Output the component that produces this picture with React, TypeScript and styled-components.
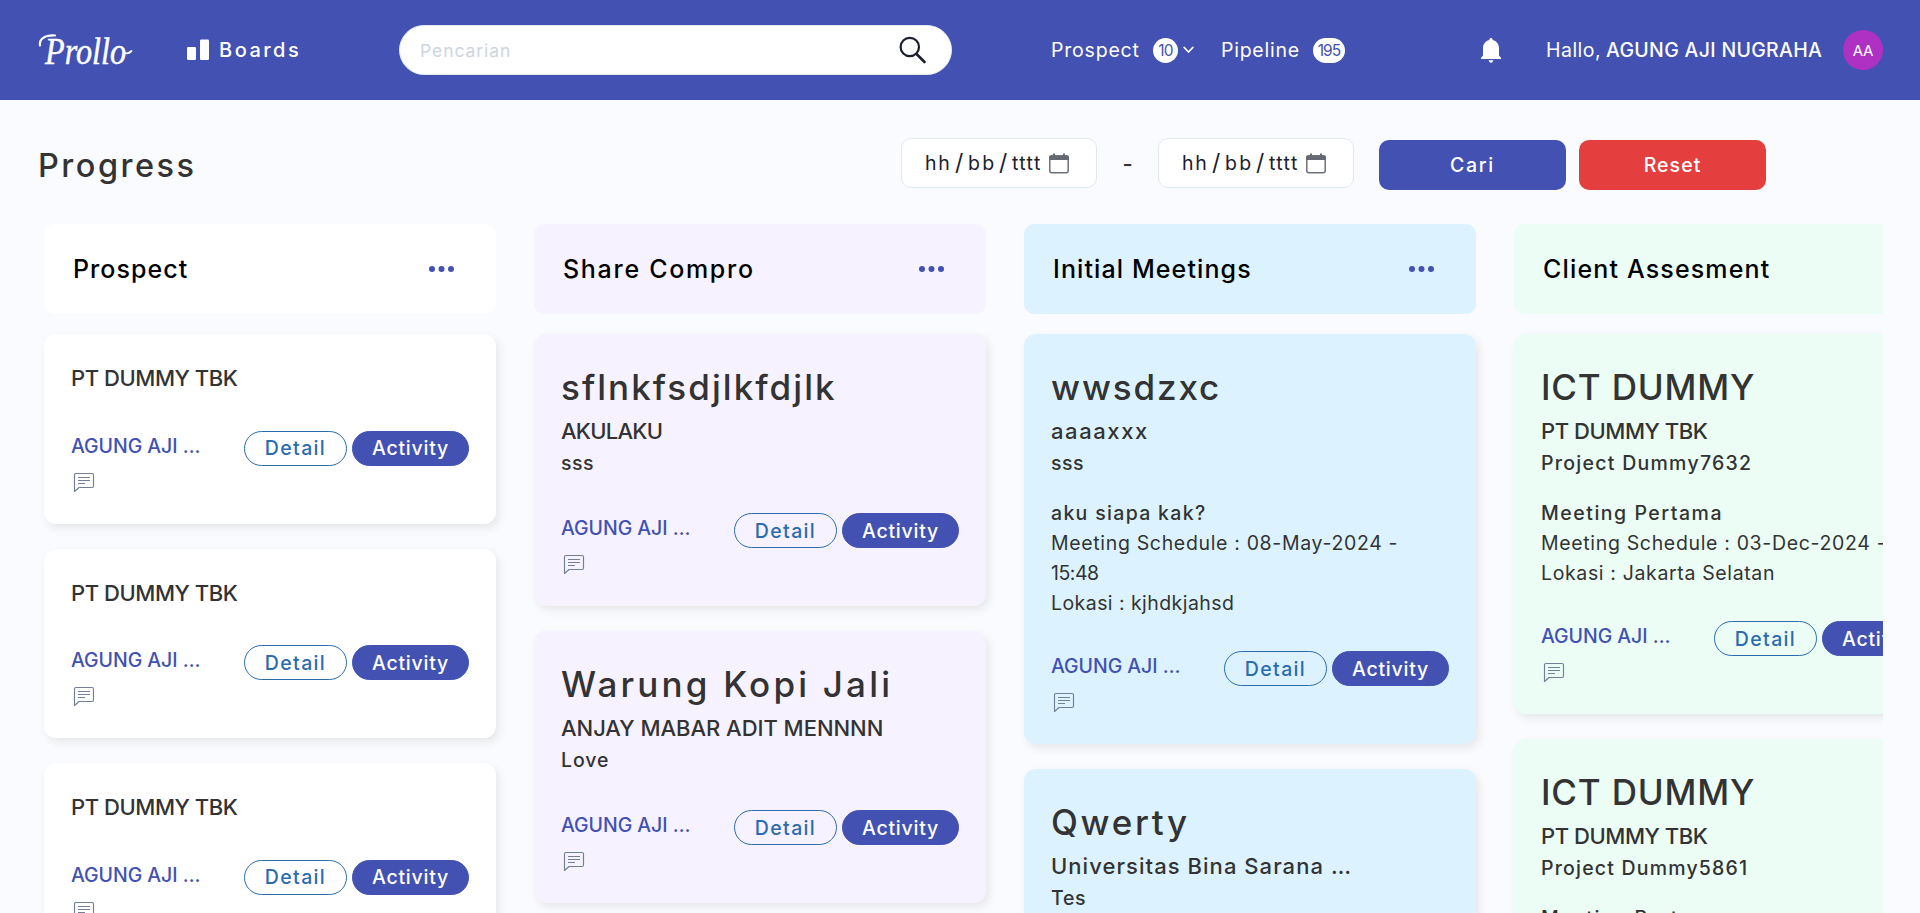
import React from 'react';
import styled, { createGlobalStyle } from 'styled-components';

const PRIMARY = '#4351b2';

const GlobalStyle = createGlobalStyle`
  *, *::before, *::after { box-sizing: border-box; }
  body {
    margin: 0;
    height: 913px;
    overflow: hidden;
    background: #fafbfe;
    color: #333333;
    font-family: Inter, "Noto Sans", sans-serif;
  }
  button { font-family: inherit; border: 0; margin: 0; padding: 0; cursor: pointer; }
  svg { display: block; flex: none; overflow: visible; }
`;

/* Tracking and weight vary with each label */
const Label = styled.span<{ $track?: number; $weight?: number; $size?: number }>`
  font-size: ${p => p.$size ?? 19.5}px;
  font-weight: ${p => p.$weight ?? 500};
  letter-spacing: ${p => p.$track ?? 0}px;
  white-space: nowrap;
`;

/* ---------- top bar ---------- */

const TopBar = styled.header`
  display: flex;
  align-items: center;
  height: 100px;
  padding: 0 37px 0 36px;
  background: ${PRIMARY};
  color: #fff;
`;

const BoardsLink = styled.a`
  display: flex;
  align-items: center;
  gap: 9px;
  width: 212px;
  margin-left: 51px;
`;

const SearchBox = styled.div`
  display: flex;
  align-items: center;
  justify-content: space-between;
  width: 553px;
  height: 50px;
  padding: 0 24px 0 20px;
  border: 1px solid #e2e8f0;
  border-radius: 25px;
  background: #fff;
  color: #1a202c;
`;

const Placeholder = styled(Label)`
  color: #cdd5e0;
`;

const NavLinks = styled.nav`
  display: flex;
  align-items: center;
  width: 430px;
  margin-left: 99px;
`;

const NavItem = styled.a<{ $width: number }>`
  display: flex;
  align-items: center;
  width: ${p => p.$width}px;
`;

const NavName = styled(Label)<{ $w: number }>`
  width: ${p => p.$w}px;
`;

const Count = styled.span<{ $wide?: boolean }>`
  display: flex;
  align-items: center;
  justify-content: center;
  width: ${p => (p.$wide ? 32 : 25)}px;
  height: 25px;
  margin-right: 5px;
  border-radius: 13px;
  background: #fff;
  color: ${PRIMARY};
  font-size: 15.5px;
  letter-spacing: -0.9px;
`;

const Greeting = styled.div`
  display: flex;
  align-items: baseline;
  width: 297px;
  margin-left: 45px;
`;

const Hello = styled(Label)`
  width: 60px;
`;

const Avatar = styled.div`
  display: flex;
  align-items: center;
  justify-content: center;
  width: 40px;
  height: 40px;
  border-radius: 50%;
  background: #ae31c4;
  font-size: 15px;
  letter-spacing: -0.3px;
`;

/* ---------- filter row ---------- */

const FilterRow = styled.section`
  display: flex;
  height: 124px;
  padding: 38px 154px 0 38px;
`;

const PageTitle = styled.h1`
  flex: 1;
  margin: 0;
  padding-top: 8px;
  font-size: 32.5px;
  line-height: 40px;
  font-weight: 500;
  letter-spacing: 2.5px;
`;

const DateField = styled.div`
  display: flex;
  align-items: center;
  width: 196px;
  height: 50px;
  padding-left: 23px;
  border: 1px solid #e2e8f0;
  border-radius: 10px;
  background: #fff;
  color: #1a202c;
`;

const DatePart = styled(Label)<{ $w: number }>`
  width: ${p => p.$w}px;
`;

const Slash = styled.span`
  width: 13px;
  font-size: 23px;
  font-weight: 400;
  text-align: left;
`;

const Separator = styled.div`
  width: 61px;
  line-height: 52px;
  text-align: center;
  font-size: 22px;
  font-weight: 500;
`;

const ActionButton = styled.button<{ $bg: string; $gap: number }>`
  width: 187px;
  height: 50px;
  margin: 2px 0 0 ${p => p.$gap}px;
  border-radius: 10px;
  background: ${p => p.$bg};
  color: #fff;
`;

/* ---------- board ---------- */

const Board = styled.main`
  display: flex;
  gap: 38px;
  height: 689px;
  margin-right: 37px;
  padding-left: 44px;
  overflow: hidden;
`;

const Column = styled.section`
  display: flex;
  flex: none;
  flex-direction: column;
  width: 452px;
`;

const ColumnHead = styled.header<{ $bg: string }>`
  display: flex;
  flex: none;
  align-items: center;
  justify-content: space-between;
  height: 90px;
  margin-bottom: 20px;
  padding: 0 42px 0 29px;
  border-radius: 10px;
  background: ${p => p.$bg};
  color: #000;
`;

const Card = styled.article<{ $bg: string; $compact: boolean }>`
  flex: none;
  margin-bottom: 25px;
  padding: ${p => (p.$compact ? 27 : 26)}px 27px 25px;
  border-radius: 12px;
  background: ${p => p.$bg};
  box-shadow: 3px 4px 9px rgba(60, 60, 50, 0.1);
`;

const CardTitle = styled.h2`
  margin: 0;
  font-size: 35px;
  line-height: 54px;
  font-weight: 500;
  white-space: nowrap;
`;

const Company = styled.div`
  height: 33px;
  line-height: 34px;
`;

const Project = styled.div`
  height: 32px;
  line-height: 32px;
`;

const Schedule = styled.div`
  margin: 19px 0 -1px;
  line-height: 30px;
`;

const Line = styled.div`
  height: 30px;
`;

const CardFoot = styled.footer<{ $gap: number }>`
  display: flex;
  align-items: flex-start;
  justify-content: space-between;
  height: 68px;
  margin-top: ${p => p.$gap}px;
`;

const Owner = styled.div`
  padding-top: 1px;
  color: ${PRIMARY};
  line-height: 28px;
`;

const CommentMark = styled.div`
  padding: 12px 0 0 3px;
`;

const Buttons = styled.div`
  display: flex;
  gap: 5px;
`;

const Pill = styled.button<{ $solid?: boolean }>`
  width: ${p => (p.$solid ? 117 : 103)}px;
  height: 35px;
  border-radius: 18px;
  border: 1px solid ${p => (p.$solid ? PRIMARY : '#2b6cb0')};
  background: ${p => (p.$solid ? PRIMARY : 'transparent')};
  color: ${p => (p.$solid ? '#fff' : '#2b6cb0')};
`;

/* ---------- drawings ---------- */

const Logo = () => (
  <svg width="100" height="44" viewBox="0 0 100 44" fill="none" stroke="#fff" strokeLinecap="round">
    <path d="M4 17.500C3 11 8.500 7 19 7.500" strokeWidth="2.200" />
    <text x="9" y="35.500" fill="#fff" stroke="#fff" strokeWidth="0.500" fontFamily="'Liberation Serif', serif" fontStyle="italic" fontWeight="400" fontSize="38" textLength="81" lengthAdjust="spacingAndGlyphs">Prollo</text>
    <path d="M89 25C92 26 94 24.500 95.500 23" strokeWidth="1.800" />
  </svg>
);

const BoardsIcon = () => (
  <svg width="23" height="22" viewBox="0 0 23 22" fill="#fff">
    <rect x="0" y="8" width="9" height="13" rx="1.2" />
    <rect x="13" y="0.500" width="9" height="20.500" rx="1.2" />
  </svg>
);

const SearchIcon = () => (
  <svg width="28" height="28" viewBox="0 0 28 28" fill="none" stroke="#1a202c" strokeWidth="2.200" strokeLinecap="round">
    <circle cx="10.800" cy="11" r="9.200" />
    <path d="M17.500 18L25.500 26" strokeWidth="2.600" />
  </svg>
);

const ChevronIcon = () => (
  <svg width="11" height="8" viewBox="0 0 11 8" fill="none" stroke="#fff" strokeWidth="1.800" strokeLinecap="round" strokeLinejoin="round">
    <path d="M1.200 1.500L5.500 6L9.800 1.500" />
  </svg>
);

const BellIcon = () => (
  <svg width="20" height="25" viewBox="0 0 20 25" fill="#fff">
    <path d="M10 0C11 0 11.700 .8 11.700 2C15.600 3 18 6 18 10V17.500L20 19.800V21H0V19.800L2 17.500V10C2 6 4.400 3 8.300 2C8.300 .8 9 0 10 0Z" />
    <path d="M7.600 22.300H12.400C12 24 11.200 24.700 10 24.700S8 24 7.600 22.300Z" />
  </svg>
);

const CalendarIcon = () => (
  <svg width="20" height="21" viewBox="0 0 20 21">
    <rect x=".8" y="3" width="18.400" height="16.800" rx="2" fill="none" stroke="#6d7179" strokeWidth="1.500" />
    <path d="M0 7V4.300Q0 2.300 2 2.300H18Q20 2.300 20 4.300V7Z" fill="#656a72" />
    <path d="M5 0.500V3M15 0.500V3" stroke="#656a72" strokeWidth="2" />
  </svg>
);

const DotsIcon = () => (
  <svg width="25" height="6" viewBox="0 0 25 6" fill={PRIMARY}>
    <circle cx="3" cy="3" r="3" />
    <circle cx="12.500" cy="3" r="3" />
    <circle cx="22" cy="3" r="3" />
  </svg>
);

const CommentIcon = () => (
  <svg width="20" height="19" viewBox="0 0 20 19" fill="none" stroke="#718096" strokeWidth="1.150">
    <path d="M.5 18.500V2Q.5 .5 2 .5H18Q19.500 .5 19.500 2V13Q19.500 14.500 18 14.500H5Z" strokeLinejoin="round" />
    <path d="M4 4.500H16M4 7.500H16M4 10.500H11" />
  </svg>
);

/* ---------- data ---------- */

type Text = [string, number];
interface Item {
  title?: Text;
  company: Text;
  project?: Text;
  agenda?: Text;
  details?: Text[];
}
interface Stage {
  name: Text;
  color: string;
  items: Item[];
}

const dummy: Item = { company: ['PT DUMMY TBK', -0.45] };

const stages: Stage[] = [
  { name: ['Prospect', 1.05], color: '#ffffff', items: [dummy, dummy, dummy] },
  {
    name: ['Share Compro', 1.7],
    color: '#f7f2ff',
    items: [
      { title: ['sflnkfsdjlkfdjlk', 2.04], company: ['AKULAKU', -0.75], project: ['sss', 0.5] },
      { title: ['Warung Kopi Jali', 3.2], company: ['ANJAY MABAR ADIT MENNNN', -0.03], project: ['Love', 0.9] },
    ],
  },
  {
    name: ['Initial Meetings', 1.1],
    color: '#dcf3ff',
    items: [
      {
        title: ['wwsdzxc', 1.86],
        company: ['aaaaxxx', 1.6],
        project: ['sss', 0.5],
        agenda: ['aku siapa kak?', 1.32],
        details: [
          ['Meeting Schedule : 08-May-2024 -', 0.66],
          ['15:48', -0.5],
          ['Lokasi : kjhdkjahsd', 0.44],
        ],
      },
      { title: ['Qwerty', 2.67], company: ['Universitas Bina Sarana …', 1.05], project: ['Tes', 0.67] },
    ],
  },
  {
    name: ['Client Assesment', 1.15],
    color: '#ebfdf5',
    items: [
      {
        title: ['ICT DUMMY', 0.82],
        company: ['PT DUMMY TBK', -0.45],
        project: ['Project Dummy7632', 1.28],
        agenda: ['Meeting Pertama', 1.52],
        details: [
          ['Meeting Schedule : 03-Dec-2024 -', 0.66],
          ['Lokasi : Jakarta Selatan', 0.64],
        ],
      },
      {
        title: ['ICT DUMMY', 0.82],
        company: ['PT DUMMY TBK', -0.45],
        project: ['Project Dummy5861', 1.2],
        agenda: ['Meeting Pertama', 1.52],
      },
    ],
  },
];

const DateInput = () => (
  <DateField>
    <DatePart $w={30} $weight={400} $track={1.6}>hh</DatePart>
    <Slash>/</Slash>
    <DatePart $w={31} $weight={400} $track={2.2}>bb</DatePart>
    <Slash>/</Slash>
    <DatePart $w={37} $weight={400} $track={1.4}>tttt</DatePart>
    <CalendarIcon />
  </DateField>
);

const BoardCard = ({ item, color }: { item: Item; color: string }) => (
  <Card $bg={color} $compact={!item.title}>
    {item.title && (
      <CardTitle>
        <Label $size={35} $track={item.title[1]}>{item.title[0]}</Label>
      </CardTitle>
    )}
    <Company>
      <Label $size={22} $track={item.company[1]}>{item.company[0]}</Label>
    </Company>
    {item.project && (
      <Project>
        <Label $track={item.project[1]}>{item.project[0]}</Label>
      </Project>
    )}
    {item.agenda && (
      <Schedule>
        <Line><Label $track={item.agenda[1]}>{item.agenda[0]}</Label></Line>
        {item.details?.map(([text, track]) => (
          <Line key={text}><Label $weight={400} $track={track}>{text}</Label></Line>
        ))}
      </Schedule>
    )}
    <CardFoot $gap={item.title ? 34 : 36.6}>
      <Owner>
        <Label $track={-0.05}>AGUNG AJI …</Label>
        <CommentMark><CommentIcon /></CommentMark>
      </Owner>
      <Buttons>
        <Pill><Label $track={1.35}>Detail</Label></Pill>
        <Pill $solid><Label $track={0.77}>Activity</Label></Pill>
      </Buttons>
    </CardFoot>
  </Card>
);

export default function App() {
  return (
    <>
      <GlobalStyle />
      <TopBar>
        <Logo />
        <BoardsLink>
          <BoardsIcon />
          <Label $size={20} $track={2.5}>Boards</Label>
        </BoardsLink>
        <SearchBox>
          <Placeholder $size={17.5} $weight={400} $track={0.93}>Pencarian</Placeholder>
          <SearchIcon />
        </SearchBox>
        <NavLinks>
          <NavItem $width={170}>
            <NavName $w={102} $weight={400} $track={0.8}>Prospect</NavName>
            <Count>10</Count>
            <ChevronIcon />
          </NavItem>
          <NavItem $width={140}>
            <NavName $w={92} $weight={400} $track={0.75}>Pipeline</NavName>
            <Count $wide>195</Count>
          </NavItem>
        </NavLinks>
        <BellIcon />
        <Greeting>
          <Hello $weight={400} $track={0.48}>Hallo,</Hello>
          <Label $track={0.32}>AGUNG AJI NUGRAHA</Label>
        </Greeting>
        <Avatar>AA</Avatar>
      </TopBar>

      <FilterRow>
        <PageTitle>Progress</PageTitle>
        <DateInput />
        <Separator>-</Separator>
        <DateInput />
        <ActionButton $bg={PRIMARY} $gap={25}><Label $track={1.7}>Cari</Label></ActionButton>
        <ActionButton $bg="#e53e3e" $gap={13}><Label $track={1.06}>Reset</Label></ActionButton>
      </FilterRow>

      <Board>
        {stages.map(stage => (
          <Column key={stage.name[0]}>
            <ColumnHead $bg={stage.color}>
              <Label $size={25} $track={stage.name[1]}>{stage.name[0]}</Label>
              <DotsIcon />
            </ColumnHead>
            {stage.items.map((item, i) => (
              <BoardCard key={i} item={item} color={stage.color} />
            ))}
          </Column>
        ))}
      </Board>
    </>
  );
}
